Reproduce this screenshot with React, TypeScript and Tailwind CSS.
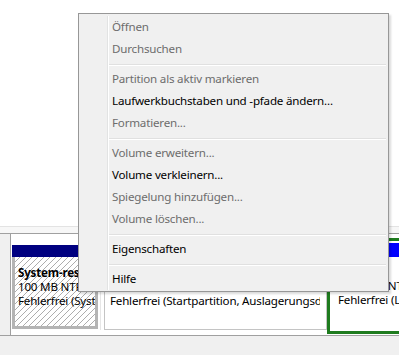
import React from "react";

type Item = { label: string; enabled?: boolean } | { sep: true };

const items: Item[] = [
  { label: "Öffnen" },
  { label: "Durchsuchen" },
  { sep: true },
  { label: "Partition als aktiv markieren" },
  { label: "Laufwerkbuchstaben und -pfade ändern...", enabled: true },
  { label: "Formatieren..." },
  { sep: true },
  { label: "Volume erweitern..." },
  { label: "Volume verkleinern...", enabled: true },
  { label: "Spiegelung hinzufügen..." },
  { label: "Volume löschen..." },
  { sep: true },
  { label: "Eigenschaften", enabled: true },
  { sep: true },
  { label: "Hilfe", enabled: true },
];

function ContextMenu() {
  return (
    <div className="absolute left-[78px] top-[13px] w-[311px] border border-[#979797] bg-[#f0f0f0] px-[2px] pt-[2px] pb-[1px] shadow-[2px_2px_2px_rgba(0,0,0,0.15)] flex">
      <div className="w-[27px] shrink-0 border-r border-[#e2e3e3]" />
      <div className="flex-1 border-l border-white flex flex-col">
        {items.map((it, i) =>
          "sep" in it ? (
            <div key={i} className="h-[8px] pt-[4px]">
              <div className="h-[1px] bg-[#e0e0e0]" />
              <div className="h-[1px] bg-white" />
            </div>
          ) : (
            <div
              key={i}
              className={`h-[22px] leading-[22px] pl-[3px] whitespace-nowrap ${
                it.enabled ? "text-black" : "text-[#6d6d6d]"
              }`}
            >
              {it.label}
            </div>
          )
        )}
      </div>
    </div>
  );
}

export default function App() {
  return (
    <div className="relative w-[399px] h-[355px] overflow-hidden bg-white font-['Noto_Sans','DejaVu_Sans',sans-serif] text-[11.6px] tracking-[-0.2px] text-black flex flex-col">
      <div className="h-[226px] shrink-0 bg-white" />
      <div className="h-[7px] shrink-0 border-t border-[#e3e3e3] bg-[#f7f7f7]" />
      <div className="h-[103px] shrink-0 border-y border-[#a0a0a0] flex bg-white">
        <div className="w-[11px] shrink-0 bg-[#f0f0f0] border-r border-[#a0a0a0]" />
        <div className="w-[1px] shrink-0" />
        {/* Partition 1 */}
        <div className="w-[86px] shrink-0 pt-[11px] flex flex-col">
          <div className="h-[12px] bg-[#000080]" />
          <div className="h-[72px] border-x-[3px] border-b-[3px] border-[#b4b4b4] bg-[image:repeating-linear-gradient(135deg,#ffffff_0px,#ffffff_3.4px,#adadad_3.4px,#adadad_4.24px)] pt-[9px] pl-[3px] overflow-hidden leading-[14px] whitespace-nowrap">
            <div className="font-bold">System-reserviert</div>
            <div>100 MB NTFS</div>
            <div>Fehlerfrei (System, Aktiv, Primäre Partition)</div>
          </div>
        </div>
        <div className="w-[2px] shrink-0" />
        {/* Partition 2 */}
        <div className="w-[227px] shrink-0 pt-[11px] flex flex-col">
          <div className="h-[12px] bg-[#000080]" />
          <div className="h-[73px] border-l border-[#e6e6e6] pl-[3px] flex">
            <div className="flex-1 border-l border-r border-b border-[#c4c4c4] bg-white pt-[9px] pl-[5px] pr-[6px] overflow-hidden leading-[14px] whitespace-nowrap">
              <div className="font-bold">(C:)</div>
              <div>465,66 GB NTFS</div>
              <div className="overflow-hidden">Fehlerfrei (Startpartition, Auslagerungsdatei, Absturzabbild, Primäre Partition)</div>
            </div>
          </div>
        </div>
        {/* Partition 3 (selected) */}
        <div className="w-[120px] shrink-0 pt-[4px]">
          <div className="h-[96px] border-[3px] border-[#1e7b1e] pl-[2px] pt-[2px]">
            <div className="h-[14px] bg-[#0000ff]" />
            <div className="pt-[8px] pl-[6px] leading-[14px] whitespace-nowrap">
              <div className="font-bold">(D:)</div>
              <div>90,00 GB NTFS</div>
              <div>Fehlerfrei (Logisches Laufwerk)</div>
            </div>
          </div>
        </div>
      </div>
      <div className="flex-1 bg-[#f0f0f0]" />
      <ContextMenu />
    </div>
  );
}
